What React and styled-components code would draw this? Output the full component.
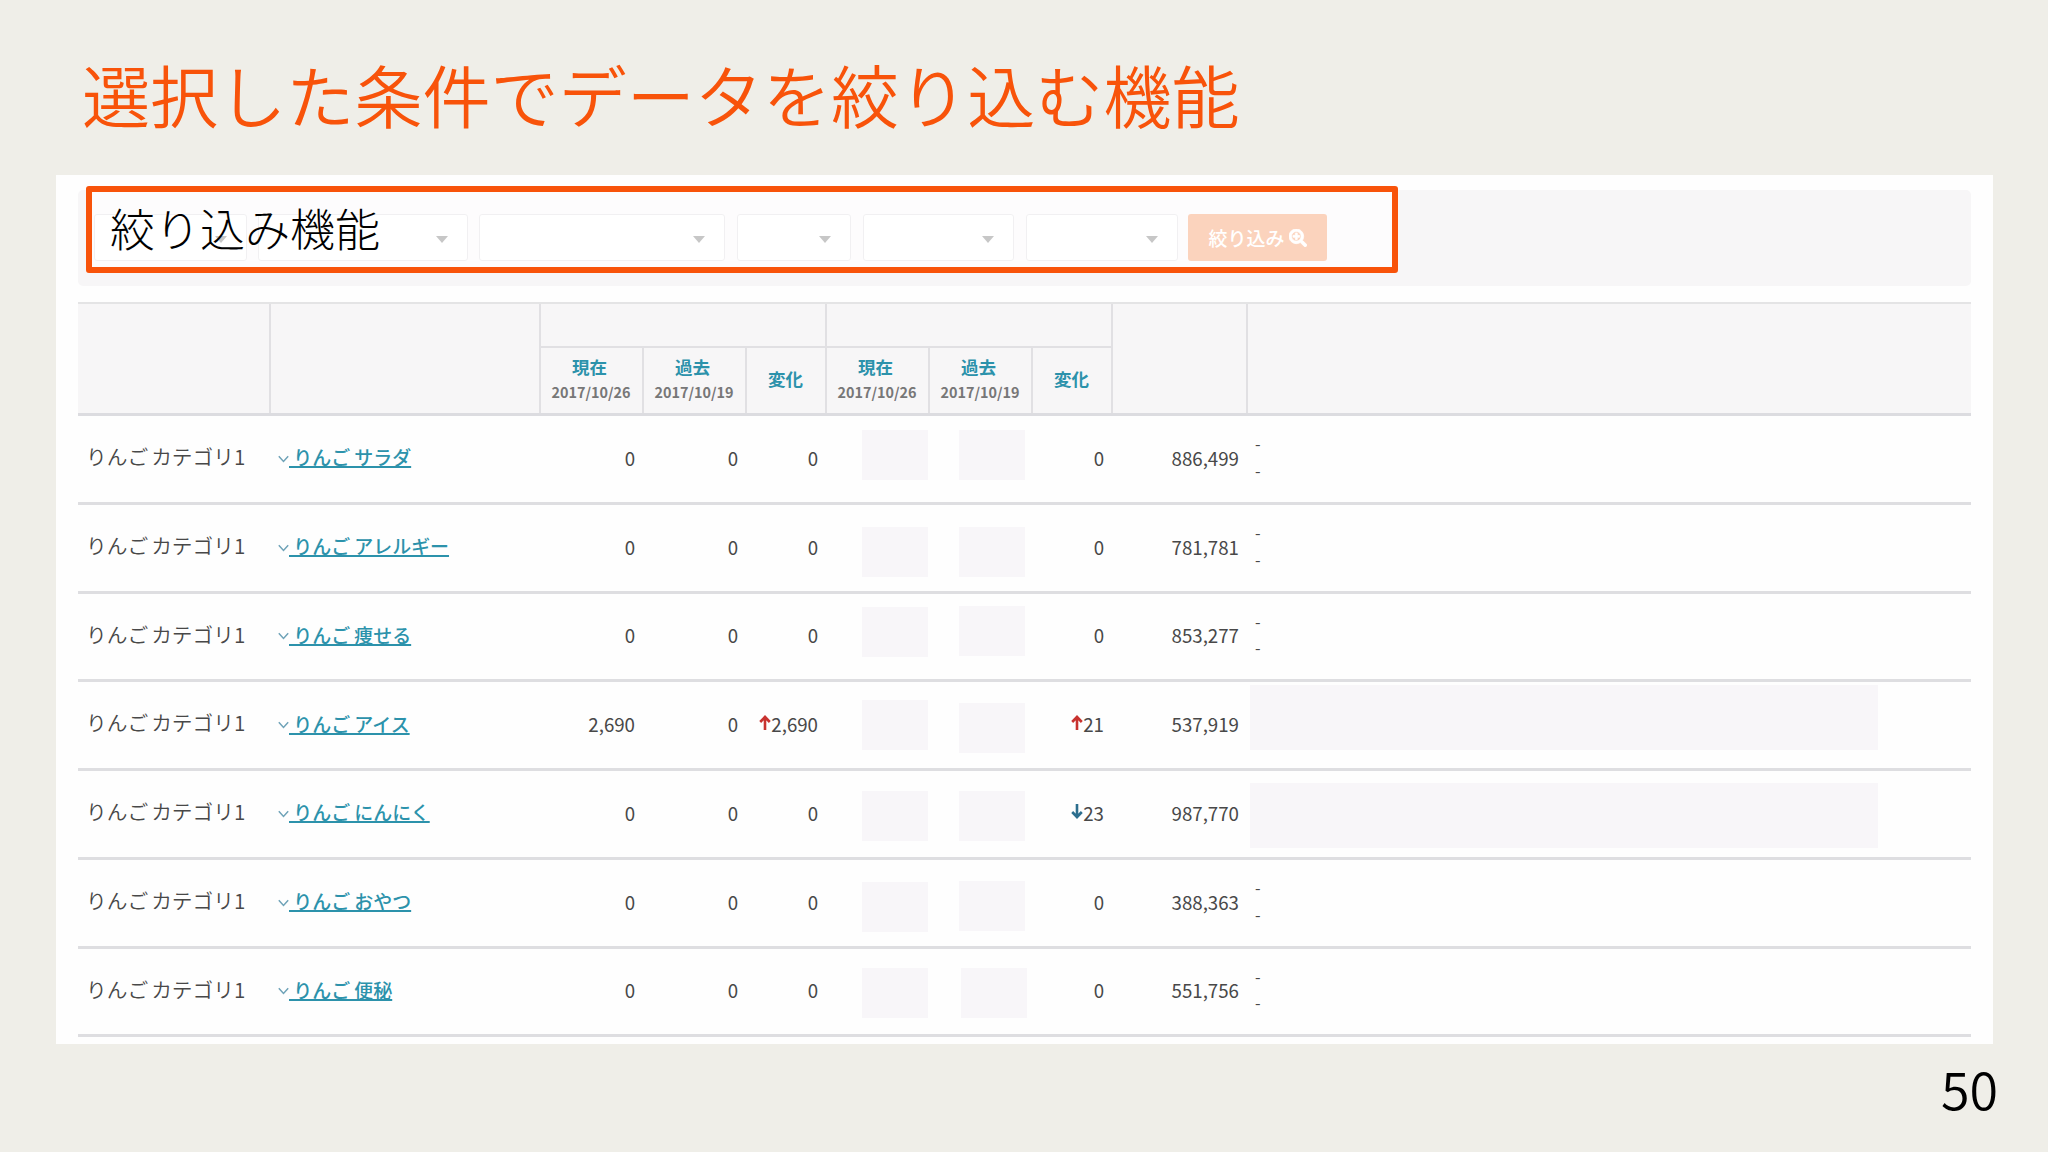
import styled, { createGlobalStyle } from 'styled-components'
import { FaSearchPlus } from 'react-icons/fa'

const GlobalStyle = createGlobalStyle`
  * {
    box-sizing: border-box;
  }

  body {
    margin: 0;
    background: #efeee8;
    font-family: 'Noto Sans CJK JP', 'Noto Sans', sans-serif;
  }
`

const Slide = styled.div`
  display: flex;
  flex-direction: column;
  width: 2048px;
  height: 1152px;
  padding: 48px 55px 0 56px;
  overflow: hidden;
  background: #efeee8;
`

const Title = styled.h1`
  height: 127px;
  margin: 0;
  padding-left: 26px;
  font-size: 68.1px;
  font-weight: 350;
  line-height: 91px;
  color: #f8530a;
  white-space: nowrap;
`

const Panel = styled.main`
  height: 869px;
  padding: 15px 22px 0 22px;
  background: #fefefe;
`

const FilterBar = styled.div`
  position: relative;
  display: flex;
  align-items: flex-start;
  height: 96px;
  margin-bottom: 16px;
  padding: 24px 0 0 16px;
  background: #f7f6f7;
  border-radius: 5px;
`

const Field = styled.div`
  display: flex;
  align-items: center;
  justify-content: flex-end;
  width: ${props => props.width}px;
  height: 47px;
  margin-right: ${props => props.gap || 12}px;
  padding-right: 19px;
  background: #fff;
  border: 1px solid #d0ced4;
  border-radius: 3px;

  &:after {
    content: '';
    margin-top: 3px;
    border: 6px solid transparent;
    border-top: 7px solid #444;
    border-bottom: 0;
  }
`

const SubmitButton = styled.button`
  display: flex;
  align-items: center;
  justify-content: center;
  gap: 4px;
  width: 139px;
  height: 47px;
  padding: 0;
  border: 0;
  border-radius: 3px;
  background: #f26c23;
  color: #fff;
  font-family: inherit;
  font-size: 19px;
  font-weight: 500;

  svg {
    width: 18px;
    height: 18px;
    stroke: #fff;
    stroke-width: 22px;
  }
`

// Washes out the form below it so that the label stands out
const Highlight = styled.div`
  position: absolute;
  top: -4px;
  left: 8px;
  width: 1312px;
  height: 87px;
  padding-left: 18px;
  border: 6px solid #f8530a;
  border-radius: 3px;
  background: rgba(255, 255, 255, 0.7);
  color: #000;
  font-size: 45px;
  font-weight: 300;
  line-height: 71px;
`

const columns = '193px 270px 103px 103px 80px 103px 103px 80px 135px 1fr'

const TableHead = styled.div`
  display: grid;
  grid-template-columns: ${columns};
  grid-template-rows: 44px 1fr;
  height: 114px;
  border-top: 2px solid #e4e4e5;
  border-bottom: 3px solid #dcdce0;
  background: #f7f6f7;
`

const HeadCell = styled.div`
  display: flex;
  flex-direction: column;
  align-items: center;
  justify-content: center;
  grid-row: ${props => (props.tall ? '1 / 3' : 'auto')};
  grid-column: ${props => props.col};
  padding: 0 1px 3px 0;
  border-right: ${props => (props.last ? 0 : 2)}px solid #e1e0e3;
  border-bottom: ${props => (props.group ? 2 : 0)}px solid #e1e0e3;
  color: #2c92ab;
  font-size: 17.5px;
  font-weight: 700;
  line-height: 24px;
`

const HeadLabel = styled.span`
  padding-right: ${props => (props.dated ? 3 : 0)}px;
`

const HeadDate = styled.span`
  padding-top: 1px;
  margin-bottom: -1px;
  color: #777;
  font-size: 14.4px;
`

const Row = styled.div`
  display: grid;
  grid-template-columns: ${columns};
  height: 88.75px;
  border-bottom: 3px solid #dedee1;
  color: #484848;
`

const Category = styled.div`
  padding-left: 8px;
  font-size: 20.7px;
  font-weight: 350;
  line-height: 80px;
  word-spacing: -1.5px;
  white-space: nowrap;
`

const Keyword = styled.div`
  display: flex;
  align-items: center;
  padding-left: 7px;

  svg {
    width: 11px;
    height: 8px;
    margin-right: 1px;
  }
`

const KeywordLink = styled.a`
  margin: -3px 0 0 -1px;
  color: #2c92ab;
  font-size: 18.95px;
  font-weight: 500;
  line-height: 28px;
  white-space: pre;
  text-decoration: underline;
  text-decoration-thickness: 1.5px;
  text-decoration-skip-ink: none;
  text-underline-offset: 1px;
`

const NumberCell = styled.div`
  display: flex;
  align-items: center;
  justify-content: flex-end;
  padding: 0 9px 3px 0;
  font-size: 18.7px;

  svg {
    width: 12px;
    height: 16px;
    margin-top: -2px;
  }
`

const MaskCell = styled.div`
  display: flex;
  justify-content: flex-start;
  align-items: flex-start;
  padding-left: ${props => props.left}px;
`

const Mask = styled.div`
  width: ${props => props.width || 66}px;
  height: ${props => props.height || 50}px;
  margin-top: ${props => props.top}px;
  background: #f8f6f9;
`

const Dashes = styled.div`
  display: flex;
  flex-direction: column;
  justify-content: center;
  padding: 0 0 4px 7px;
  font-size: 16px;
  line-height: 26.4px;
`

const PageNumber = styled.footer`
  align-self: flex-end;
  margin: -2px -5px 0 0;
  font-size: 52px;
  font-weight: 350;
  line-height: 92px;
  color: #000;
`

const Chevron = () => (
  <svg viewBox="0 0 11 8" fill="none" stroke="#6fa3b8" strokeWidth="1.5">
    <path d="M0.8 1.2 L5.5 6.4 L10.2 1.2" />
  </svg>
)

const Arrow = ({ down }) => (
  <svg viewBox="0 0 12 16" fill="none" stroke={down ? '#2c6e8e' : '#c8322f'} strokeWidth="2.6">
    {down ? <path d="M6 1 V14 M1.2 9 L6 14 L10.8 9" /> : <path d="M6 15 V2 M1.2 7 L6 2 L10.8 7" />}
  </svg>
)

const fields = [
  { width: 153, gap: 11 },
  { width: 210, gap: 11 },
  { width: 246, gap: 12 },
  { width: 114, gap: 12 },
  { width: 151, gap: 12 },
  { width: 152, gap: 10 },
]

const subHeads = [
  { label: '現在', date: '2017/10/26' },
  { label: '過去', date: '2017/10/19' },
  { label: '変化' },
  { label: '現在', date: '2017/10/26' },
  { label: '過去', date: '2017/10/19' },
  { label: '変化' },
]

// masks: top offsets of the two hidden cells, wide: top offset of the hidden url cell
const rows = [
  { keyword: 'サラダ', now: '0', diff: '0', rankDiff: '0', total: '886,499', masks: [14, 14] },
  { keyword: 'アレルギー', now: '0', diff: '0', rankDiff: '0', total: '781,781', masks: [22, 22] },
  { keyword: '痩せる', now: '0', diff: '0', rankDiff: '0', total: '853,277', masks: [13, 12] },
  { keyword: 'アイス', now: '2,690', diff: '2,690', diffDir: 'up', rankDiff: '21', rankDir: 'up', total: '537,919', masks: [18, 21], wide: 3 },
  { keyword: 'にんにく', now: '0', diff: '0', rankDiff: '23', rankDir: 'down', total: '987,770', masks: [20, 20], wide: 12 },
  { keyword: 'おやつ', now: '0', diff: '0', rankDiff: '0', total: '388,363', masks: [22, 21] },
  { keyword: '便秘', now: '0', diff: '0', rankDiff: '0', total: '551,756', masks: [19, 19], shift: 2 },
]

const KeywordRow = ({ row }) => (
  <Row>
    <Category>りんご カテゴリ1</Category>
    <Keyword>
      <Chevron />
      <KeywordLink>{` りんご ${row.keyword}`}</KeywordLink>
    </Keyword>
    <NumberCell>{row.now}</NumberCell>
    <NumberCell>0</NumberCell>
    <NumberCell>
      {row.diffDir && <Arrow down={row.diffDir === 'down'} />}
      {row.diff}
    </NumberCell>
    <MaskCell left={35}>
      <Mask top={row.masks[0]} />
    </MaskCell>
    <MaskCell left={29 + (row.shift || 0)}>
      <Mask top={row.masks[1]} />
    </MaskCell>
    <NumberCell>
      {row.rankDir && <Arrow down={row.rankDir === 'down'} />}
      {row.rankDiff}
    </NumberCell>
    <NumberCell>{row.total}</NumberCell>
    {row.wide ? (
      <MaskCell left={2}>
        <Mask width={628} height={65} top={row.wide} />
      </MaskCell>
    ) : (
      <Dashes>
        <span>-</span>
        <span>-</span>
      </Dashes>
    )}
  </Row>
)

const App = () => {
  return (
    <>
      <GlobalStyle />
      <Slide>
        <Title>選択した条件でデータを絞り込む機能</Title>

        <Panel>
          <FilterBar>
            {fields.map((field, i) => (
              <Field key={i} width={field.width} gap={field.gap} />
            ))}
            <SubmitButton>
              絞り込み
              <FaSearchPlus />
            </SubmitButton>
            <Highlight>絞り込み機能</Highlight>
          </FilterBar>

          <TableHead>
            <HeadCell tall col="1" />
            <HeadCell tall col="2" />
            <HeadCell group col="3 / 6" />
            <HeadCell group col="6 / 9" />
            <HeadCell tall col="9" />
            <HeadCell tall last col="10" />
            {subHeads.map((head, i) => (
              <HeadCell key={i} col={String(i + 3)}>
                <HeadLabel dated={Boolean(head.date)}>{head.label}</HeadLabel>
                {head.date && <HeadDate>{head.date}</HeadDate>}
              </HeadCell>
            ))}
          </TableHead>

          {rows.map(row => (
            <KeywordRow key={row.keyword} row={row} />
          ))}
        </Panel>

        <PageNumber>50</PageNumber>
      </Slide>
    </>
  )
}

export default App
